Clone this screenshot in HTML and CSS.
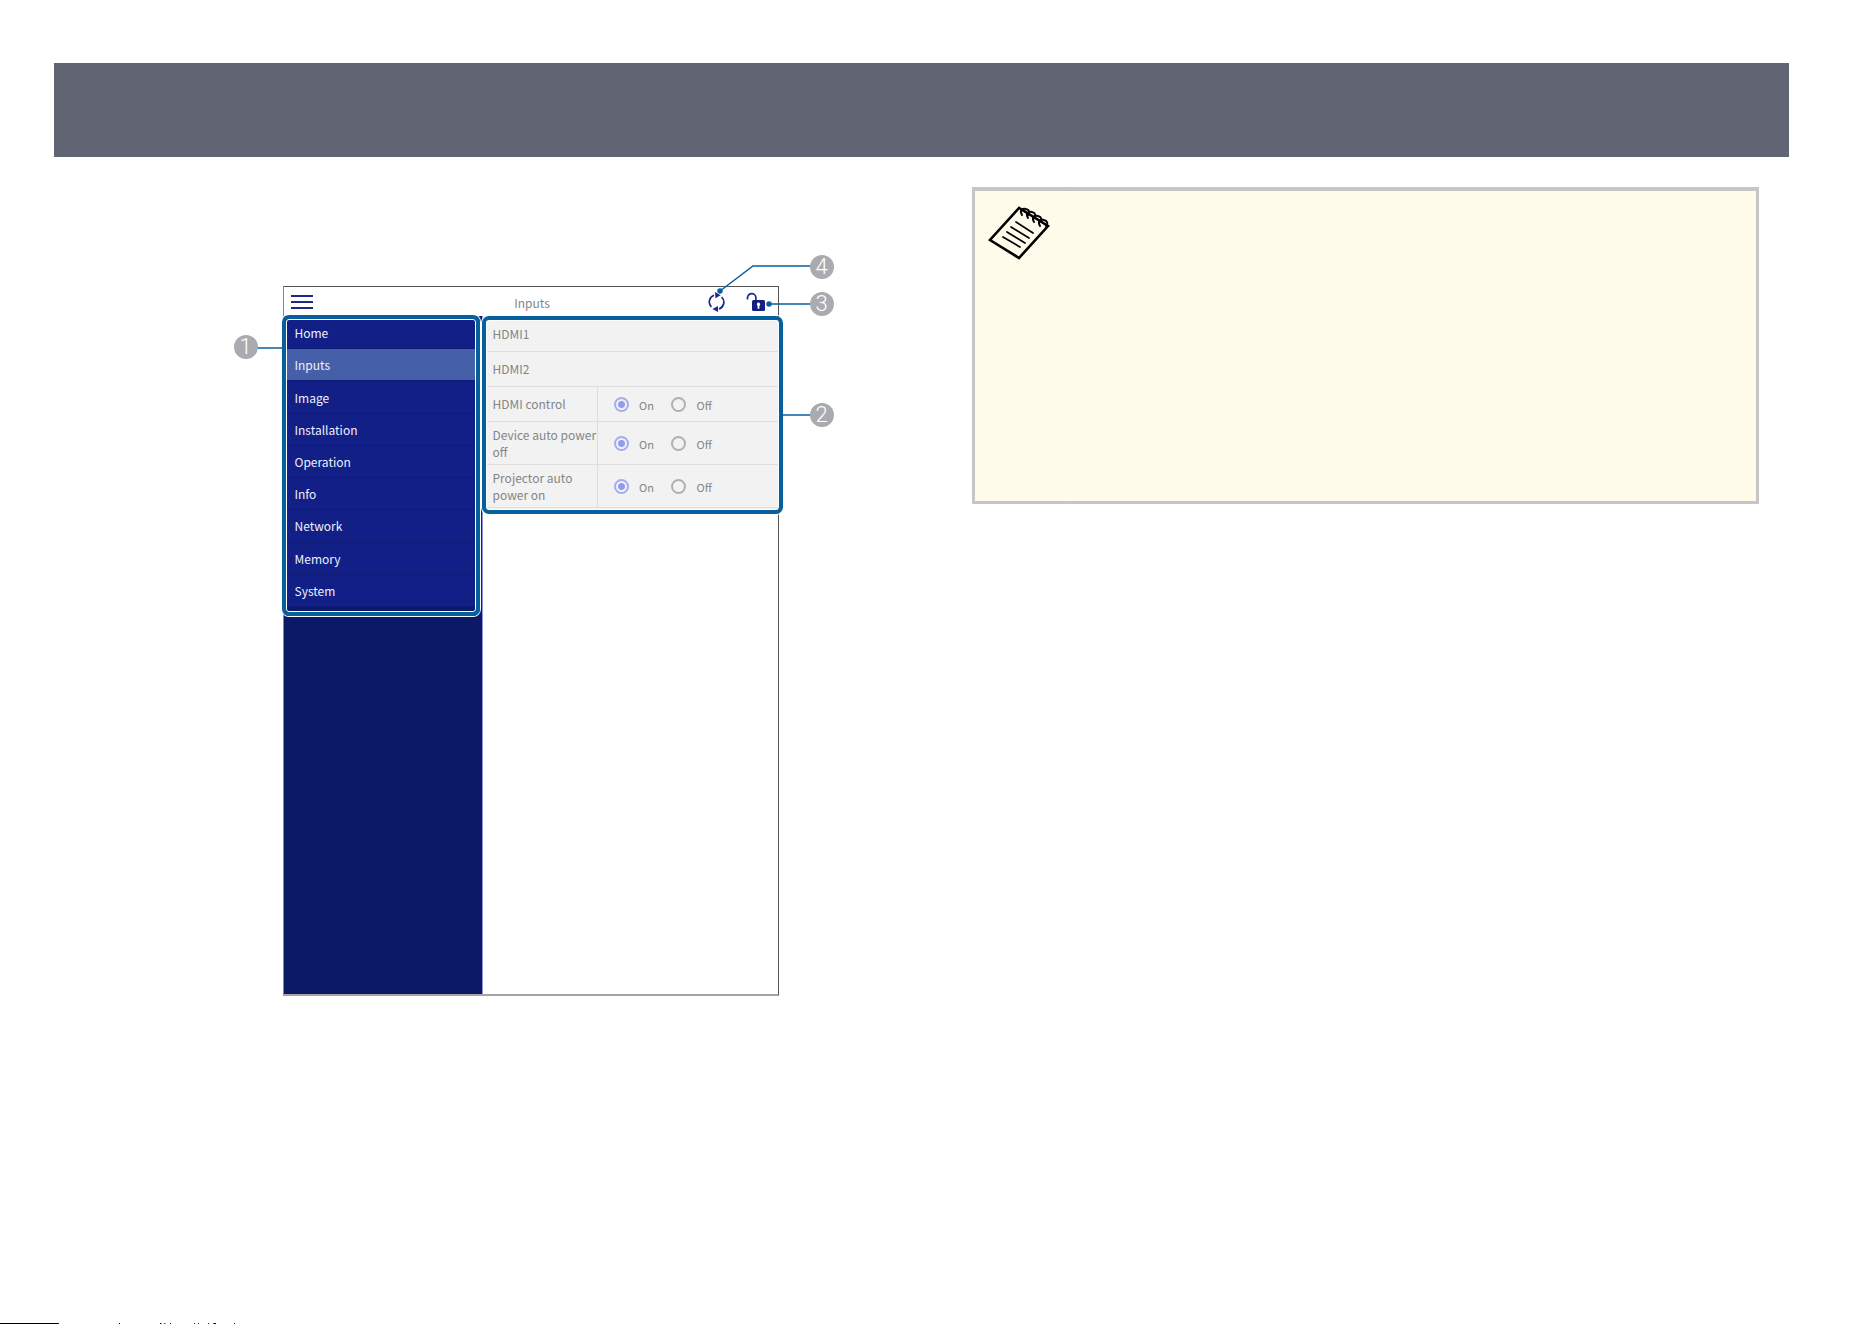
FILE: index.html
```html
<!DOCTYPE html>
<html lang="en">
<head>
    <meta charset="UTF-8">
    <meta name="viewport" content="width=device-width, initial-scale=1.0">
    <title>Inputs</title>
    <link rel="stylesheet" href="styles.css">
</head>
<body>
    <header class="banner"></header>

    <main class="columns">
        <section class="figure">
            <div class="device">
                <div class="topbar">
                    <button class="icon-btn menu-btn" type="button" aria-label="Menu">
                        <svg width="22" height="14" viewBox="0 0 22 14">
                            <path d="M0 1h22M0 7h22M0 13h22" stroke="#1c2a8c" stroke-width="2"/>
                        </svg>
                    </button>
                    <span class="title">Inputs</span>
                    <button class="icon-btn" type="button" aria-label="Refresh">
                        <svg width="18" height="20" viewBox="0 0 18 20" fill="none" stroke="#1c2a8c" stroke-width="1.7">
                            <path d="M6 3.2A7.2 7.2 0 0 0 3.4 15M11 17A7.2 7.2 0 0 0 13.6 5"/>
                            <path d="M7 0l5.6 3.2-5.2 3zM10 14v6L4.4 17z" fill="#1c2a8c" stroke="none"/>
                        </svg>
                    </button>
                    <button class="icon-btn" type="button" aria-label="Unlock">
                        <svg width="20" height="20" viewBox="0 0 20 20">
                            <path d="M1.5 7.5V5.8a4.2 4.2 0 0 1 8.4 0V9" fill="none" stroke="#1c2a8c" stroke-width="1.7"/>
                            <rect x="6" y="8" width="13" height="11" rx="1.5" fill="#141f80"/>
                            <path d="M12.5 10.6a1.8 1.8 0 0 1 .9 3.3v2.8h-1.8v-2.8a1.8 1.8 0 0 1 .9-3.3z" fill="#fff"/>
                        </svg>
                    </button>
                </div>

                <div class="screen">
                    <div class="sidebar">
                        <nav class="menu framed">
                            <a href="#">Home</a>
                            <a href="#" class="active">Inputs</a>
                            <a href="#">Image</a>
                            <a href="#">Installation</a>
                            <a href="#">Operation</a>
                            <a href="#">Info</a>
                            <a href="#">Network</a>
                            <a href="#">Memory</a>
                            <a href="#">System</a>
                        </nav>
                    </div>

                    <div class="content">
                        <div class="settings framed">
                            <table>
                                <colgroup>
                                    <col class="col-name">
                                    <col>
                                </colgroup>
                                <tbody>
                                    <tr>
                                        <th colspan="2" scope="row">HDMI1</th>
                                    </tr>
                                    <tr>
                                        <th colspan="2" scope="row">HDMI2</th>
                                    </tr>
                                    <tr>
                                        <th scope="row">HDMI control</th>
                                        <td>
                                            <label><input type="radio" name="hdmi-control" checked>On</label>
                                            <label><input type="radio" name="hdmi-control">Off</label>
                                        </td>
                                    </tr>
                                    <tr class="tall">
                                        <th scope="row">Device auto power<br>off</th>
                                        <td>
                                            <label><input type="radio" name="device-off" checked>On</label>
                                            <label><input type="radio" name="device-off">Off</label>
                                        </td>
                                    </tr>
                                    <tr class="tall">
                                        <th scope="row">Projector auto<br>power on</th>
                                        <td>
                                            <label><input type="radio" name="projector-on" checked>On</label>
                                            <label><input type="radio" name="projector-on">Off</label>
                                        </td>
                                    </tr>
                                </tbody>
                            </table>
                        </div>
                    </div>
                </div>

                <!-- Callout on the left side -->
                <svg class="leader leader-left" width="26" height="2"><path d="M0 1h26"/></svg>
                <span class="badge badge-1">1</span>

                <!-- Callouts on the right side -->
                <svg class="leader leader-right" width="96" height="160" viewBox="0 0 96 160">
                    <path d="M5 32L38 7h57M54 45h41M66 156h29"/>
                    <circle cx="5" cy="32" r="2"/>
                    <circle cx="54" cy="45" r="2"/>
                </svg>
                <span class="badge badge-2">2</span>
                <span class="badge badge-3">3</span>
                <span class="badge badge-4">4</span>
            </div>
        </section>

        <aside class="note">
            <div class="note-icon">
                <svg width="62" height="54" viewBox="0 0 62 54" fill="none" stroke="#000" stroke-linecap="round">
                    <path d="M31 2L2 34l29 18 29-32z" stroke-width="2.6"/>
                    <path d="M28 16l17 11M23 21l18 11M19 26l18 11M15 31l17 10" stroke-width="1.7"/>
                    <path d="M34 9c-3-5 1-7 4-6 4 1 4 4 2 6M40 12c-3-5 1-7 4-6 4 1 4 4 2 6M46 16c-3-5 1-7 4-6 4 1 4 4 2 6M52 20c-3-5 1-7 4-6 4 1 4 4 2 6" stroke-width="2"/>
                </svg>
            </div>
            <div class="note-text"></div>
        </aside>
    </main>

    <footer class="edge">
        <svg width="240" height="1" shape-rendering="crispEdges">
            <path d="M0 .5h58M119 .5h1M160 .5h1M214 .5h2" stroke="#000"/>
            <path d="M58 .5h1M170 .5h1M194 .5h1M198 .5h1M208 .5h1M234 .5h1" stroke="#1a10e0"/>
            <path d="M164 .5h1M213 .5h1" stroke="#e02020"/>
            <path d="M161 .5h1M165 .5h1" stroke="#30c8d8"/>
        </svg>
    </footer>
</body>
</html>
```

FILE: styles.css
```css
* {
    box-sizing: border-box;
}

body {
    font-family: "Noto Sans CJK JP", "Noto Sans", sans-serif;
    background-color: #fff;
    margin: 0;
    min-height: 100vh;
    display: flex;
    flex-direction: column;
}

.banner {
    height: 94px;
    margin: 63px 83px 0 54px;
    background-color: #616473;
}

.columns {
    flex: 1;
    display: grid;
    grid-template-columns: 1fr 1fr;
    gap: 101px;
    align-items: start;
    padding: 30px 113px 0 84px;
}

/* Device screen */
.figure {
    padding: 99px 0 0 106px;
}

.device {
    position: relative;
    max-width: 496px;
    margin: 0 auto;
    border: 1px solid #555;
    border-left-color: #888;
    border-bottom: 2px solid #a5a5a5;
}

.topbar {
    display: flex;
    align-items: center;
    gap: 20px;
    height: 29px;
    padding: 1px 12px 0 7px;
}

.title {
    flex: 1;
    padding-left: 44px;
    text-align: center;
    font-size: 12px;
    color: #858585;
}

.icon-btn {
    display: flex;
    padding: 0;
    border: none;
    background: none;
    cursor: pointer;
}

.screen {
    display: grid;
    grid-template-columns: 199px 1fr;
    min-height: 678px;
}

.sidebar {
    background-color: #0a1a66;
    border-right: 1px solid #8c96d8;
}

.framed {
    position: relative;
}

.framed::after {
    content: "";
    position: absolute;
    border: 4px solid #05609d;
    border-radius: 7px;
    box-shadow: 0 0 0 1px #fff, inset 0 0 0 1px #fff;
    pointer-events: none;
}

.menu {
    display: grid;
    grid-auto-rows: 1fr;
    height: 296px;
    padding: 1px 0 5px;
}

.menu::after {
    inset: -1px 2px -4px -2px;
}

.menu a {
    display: flex;
    align-items: center;
    padding-left: 11px;
    border-bottom: 1px solid #0e1a78;
    background-color: #111f86;
    color: #eef0fa;
    font-size: 12px;
    text-decoration: none;
}

.menu a.active {
    background-color: #465fa9;
}

.settings {
    padding: 0 0 3px;
    background-color: #f2f2f2;
}

.settings::after {
    inset: 0 -5px -3px -1px;
}

table {
    width: 100%;
    border-collapse: collapse;
    table-layout: fixed;
}

.col-name {
    width: 115px;
}

tr {
    height: 35px;
}

.tall {
    height: 43px;
}

th, td {
    padding: 0;
    border-bottom: 1px solid #dedede;
    color: #858585;
    font-weight: normal;
    text-align: left;
    white-space: nowrap;
}

th {
    padding-left: 10px;
    font-size: 12px;
    line-height: 17px;
}

td {
    padding-left: 16px;
    border-left: 1px solid #dedede;
    font-size: 11px;
    line-height: 16px;
}

label {
    display: inline-flex;
    align-items: center;
    gap: 10px;
    width: 55px;
    vertical-align: middle;
}

input[type="radio"] {
    appearance: none;
    flex: none;
    width: 15px;
    height: 15px;
    margin: 0;
    border: 2px solid #b0b0b0;
    border-radius: 50%;
}

input[type="radio"]:checked {
    border-color: #a3adf0;
    background: radial-gradient(#8f9cf0 0 3px, transparent 4px);
}

/* Callouts */
.leader {
    position: absolute;
    fill: #05609d;
    stroke: #05609d;
    stroke-width: 1.5;
}

.leader path {
    fill: none;
}

.leader-left {
    left: -27px;
    top: 60px;
}

.leader-right {
    right: -33px;
    top: -28px;
}

.badge {
    position: absolute;
    width: 24px;
    height: 24px;
    border-radius: 50%;
    background-color: #a9abb0;
    color: #fff;
    font-family: Roboto, sans-serif;
    font-size: 22px;
    font-weight: 300;
    line-height: 24px;
    text-align: center;
}

.badge-1 {
    left: -50px;
    top: 48px;
}

.badge-2,
.badge-3,
.badge-4 {
    right: -56px;
}

.badge-2 {
    top: 116px;
}

.badge-3 {
    top: 5px;
}

.badge-4 {
    top: -32px;
}

/* Note box */
.note {
    display: grid;
    grid-template-columns: 92px 1fr;
    min-height: 317px;
    border: 3px solid #c6c6c6;
    border-top-width: 4px;
    background-color: #fffbea;
}

.note-icon {
    padding: 15px 0 0 13px;
    border-right: 1px solid #fffdf3;
}

.edge {
    display: flex;
    height: 1px;
}
```
